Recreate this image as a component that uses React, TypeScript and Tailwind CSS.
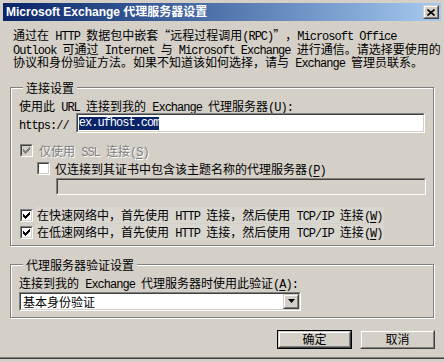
import { FC, ReactNode } from "react";

const Lat: FC<{ s: string }> = ({ s }) => (
    <span className="font-['Liberation_Mono',monospace] text-[12px] tracking-[-1px] leading-[0px] whitespace-pre">
        {s.split(/(&.)/).map((p, i) =>
            p.length === 2 && p[0] === "&" ? <u key={i} className="underline-offset-2">{p[1]}</u> : p
        )}
    </span>
);

// CJK runs stay in the body font, ascii runs go monospace like SimSun's latin glyphs
const Mx: FC<{ s: string }> = ({ s }) => (
    <>{s.split(/([\x20-\x7E]+)/).map((p, i) => (i % 2 ? <Lat key={i} s={p} /> : p))}</>
);

const Sunken: FC<{ className?: string; inner?: string; children?: ReactNode }> = ({ className = "", inner = "bg-white", children }) => (
    <div className={`border border-t-[#808080] border-l-[#808080] border-b-white border-r-white ${className}`}>
        <div className={`h-full border border-t-[#404040] border-l-[#404040] border-b-[#d4d0c8] border-r-[#d4d0c8] ${inner}`}>
            {children}
        </div>
    </div>
);

const Raised: FC<{ className?: string; children?: ReactNode }> = ({ className = "", children }) => (
    <div className={`border border-t-[#d4d0c8] border-l-[#d4d0c8] border-b-[#404040] border-r-[#404040] bg-[#d4d0c8] ${className}`}>
        <div className="h-full border border-t-white border-l-white border-b-[#808080] border-r-[#808080] flex items-center justify-center">
            {children}
        </div>
    </div>
);

const Check: FC<{ checked?: boolean; disabled?: boolean }> = ({ checked, disabled }) => (
    <Sunken className="w-[13px] h-[13px] shrink-0" inner={disabled ? "bg-[#d4d0c8]" : "bg-white"}>
        {checked && (
            <svg width="7" height="7" viewBox="0 0 7 7" className="ml-[1px] mt-[1px]" shapeRendering="crispEdges">
                <path d="M0 2 L2 4 L6 0 L7 0 L7 2 L2 7 L0 5 Z" fill={disabled ? "#808080" : "#000"} />
            </svg>
        )}
    </Sunken>
);

const Legend: FC<{ text: string }> = ({ text }) => (
    <legend className="ml-[4px] px-[3px] leading-[13px] h-[13px] bg-[#d4d0c8]">{text}</legend>
);

const groupBox =
    "mx-[10px] border border-[#808080] shadow-[inset_1px_1px_0_#fff,1px_1px_0_#fff] min-w-0";

export default function App() {
    return (
        <div className="w-[444px] h-[362px] bg-[#d4d0c8] overflow-hidden flex flex-col font-['Noto_Sans_CJK_SC',sans-serif] text-[12px] text-black [text-spacing-trim:space-all] [text-autospace:no-autospace]">
            {/* title bar */}
            <div className="mx-[3px] mt-[3px] h-[18px] shrink-0 flex items-center justify-between bg-linear-to-r from-[#0a246a] to-[#a6caf0] pl-[3px] pr-[2px]">
                <span className="text-white font-bold text-[12px] leading-none font-['Liberation_Sans','Noto_Sans_CJK_SC',sans-serif]">
                    Microsoft Exchange 代理服务器设置
                </span>
                <Raised className="w-[16px] h-[14px]">
                    <svg width="8" height="7" viewBox="0 0 8 7">
                        <path d="M0.5 0.5 L7.5 6.5 M7.5 0.5 L0.5 6.5" stroke="#000" strokeWidth="1.6" />
                    </svg>
                </Raised>
            </div>

            <p className="ml-[13px] mt-[7px] leading-[13.5px] h-[40.5px] whitespace-nowrap">
                <Mx s="通过在 HTTP 数据包中嵌套“远程过程调用(RPC)”，Microsoft Office" />
                <br />
                <Mx s="Outlook 可通过 Internet 与 Microsoft Exchange 进行通信。请选择要使用的" />
                <br />
                <Mx s="协议和身份验证方法。如果不知道该如何选择，请与 Exchange 管理员联系。" />
            </p>

            {/* connection settings */}
            <fieldset className={`${groupBox} mt-[12px] pt-[5px] pb-[6px] pl-[8px] pr-[8px]`}>
                <Legend text="连接设置" />
                <div className="leading-[13px] h-[13px]">
                    <Mx s="使用此 URL 连接到我的 Exchange 代理服务器(&U):" />
                </div>
                <div className="mt-[1.5px] flex items-center h-[20px]">
                    <span className="w-[57px] leading-[13px]">
                        <Mx s="https://" />
                    </span>
                    <Sunken className="w-[350px] h-[20px]" inner="bg-white flex items-center pl-[1px]">
                        <span className="bg-[#0a246a] text-white h-[13px] flex items-center">
                            <Lat s="ex.ufhost.com" />
                        </span>
                    </Sunken>
                </div>
                <div className="mt-[10.5px] flex items-center gap-[6px] pl-[1px] h-[13px] text-[#808080] [text-shadow:1px_1px_0_#fff]">
                    <Check checked disabled />
                    <span className="leading-[13px]">
                        <Mx s="仅使用 SSL 连接(&S)" />
                    </span>
                </div>
                <div className="mt-[5px] flex items-center gap-[5px] pl-[18px] h-[13px]">
                    <Check />
                    <span className="leading-[13px]">
                        <Mx s="仅连接到其证书中包含该主题名称的代理服务器(&P)" />
                    </span>
                </div>
                <div className="mt-[3.5px] pl-[37px]">
                    <Sunken className="w-[370px] h-[17px]" inner="bg-[#d4d0c8]" />
                </div>
                <div className="mt-[13.5px] flex items-center gap-[2px] pl-[1px] h-[13px]">
                    <Check checked />
                    <span className="leading-[16px] h-[16px] px-[2px] bg-[#d9d6d0]">
                        <Mx s="在快速网络中，首先使用 HTTP 连接，然后使用 TCP/IP 连接(&W)" />
                    </span>
                </div>
                <div className="mt-[4px] flex items-center gap-[2px] pl-[1px] h-[13px]">
                    <Check checked />
                    <span className="leading-[16px] h-[16px] px-[2px] bg-[#d9d6d0]">
                        <Mx s="在低速网络中，首先使用 HTTP 连接，然后使用 TCP/IP 连接(&W)" />
                    </span>
                </div>
            </fieldset>

            {/* proxy auth */}
            <fieldset className={`${groupBox} mt-[12.5px] pt-[5px] pb-[6px] pl-[8px] pr-[8px]`}>
                <Legend text="代理服务器验证设置" />
                <div className="leading-[13px] h-[13px]">
                    <Mx s="连接到我的 Exchange 代理服务器时使用此验证(&A):" />
                </div>
                <Sunken className="mt-[2.5px] w-[282px] h-[19px]" inner="bg-white flex items-center justify-between">
                    <span className="pl-[2px] leading-[13px]">基本身份验证</span>
                    <Raised className="w-[16px] h-full">
                        <svg width="7" height="4" viewBox="0 0 7 4">
                            <path d="M0 0 H7 L3.5 4 Z" fill="#000" />
                        </svg>
                    </Raised>
                </Sunken>
            </fieldset>

            {/* buttons */}
            <div className="mt-[12px] flex justify-end gap-[8px] pr-[9px]">
                <div className="w-[75px] h-[19px] border border-black">
                    <Raised className="h-full">
                        <span className="leading-none">确定</span>
                    </Raised>
                </div>
                <Raised className="w-[75px] h-[19px]">
                    <span className="leading-none">取消</span>
                </Raised>
            </div>

            <div className="flex-1" />
            <div className="h-[1px] bg-[#808080] shrink-0" />
            <div className="h-[1px] bg-[#404040] shrink-0" />
            <div className="h-[3px] bg-[#d4d0c8] shrink-0" />
        </div>
    );
}
